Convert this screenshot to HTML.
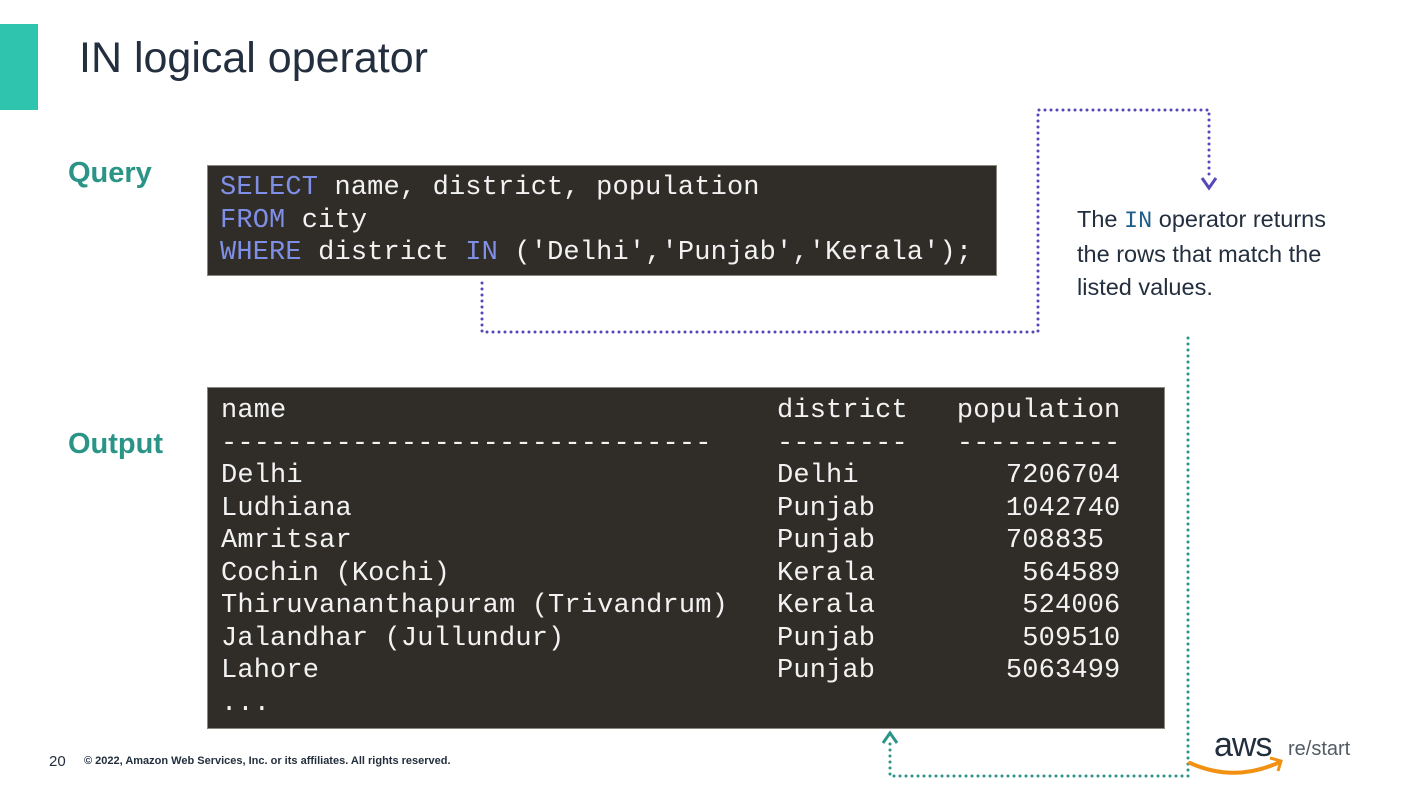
<!DOCTYPE html>
<html><head><meta charset="utf-8"><style>
body{margin:0;width:1426px;height:798px;background:#fff;position:relative;overflow:hidden;font-family:"Liberation Sans",sans-serif;}
.a{position:absolute;}
pre{margin:0;font-family:"Liberation Mono",monospace;font-size:27px;line-height:32.5px;color:#f2f2f2;letter-spacing:0.15px;}
.k{color:#7f8fe6;}
.box{background:#302d29;border:1px solid #8a8780;}
</style></head><body>
<div class="a" style="left:0;top:24px;width:38px;height:86px;background:#2ec4ad"></div>
<div class="a" style="left:79px;top:34px;font-size:43px;color:#232f3e">IN logical operator</div>
<div class="a" style="left:68px;top:157px;font-size:29px;font-weight:bold;color:#2a9486">Query</div>
<div class="a" style="left:68px;top:428px;font-size:29px;font-weight:bold;color:#2a9486">Output</div>
<div class="a box" style="left:207px;top:165px;width:788px;height:109px"></div>
<pre class="a" style="left:220px;top:172px"><span class="k">SELECT</span> name, district, population
<span class="k">FROM</span> city
<span class="k">WHERE</span> district <span class="k">IN</span> ('Delhi','Punjab','Kerala');</pre>
<div class="a box" style="left:207px;top:387px;width:956px;height:340px"></div>
<pre class="a" style="left:221px;top:395px">name                              district   population
------------------------------    --------   ----------
Delhi                             Delhi         7206704
Ludhiana                          Punjab        1042740
Amritsar                          Punjab        708835
Cochin (Kochi)                    Kerala         564589
Thiruvananthapuram (Trivandrum)   Kerala         524006
Jalandhar (Jullundur)             Punjab         509510
Lahore                            Punjab        5063499
...</pre>
<div class="a" style="left:1077px;top:203px;font-size:23.5px;line-height:33px;color:#232f3e">The <span style="font-family:'Liberation Mono',monospace;color:#1d5f8a">IN</span> operator returns<br>the rows that match the<br>listed values.</div>
<svg class="a" style="left:0;top:0" width="1426" height="798">
<g fill="none" stroke-width="3" stroke-linecap="round" stroke-dasharray="0 6">
<path d="M482 283V332H1038V110H1209V180" stroke="#5548b8"/>
<path d="M1188 338V776H890V742" stroke="#2a9486"/>
</g>
<path d="M1202 178L1209 188L1216 178" fill="none" stroke="#5548b8" stroke-width="3"/>
<path d="M883 743L890 733L897 743" fill="none" stroke="#2a9486" stroke-width="3"/>
<path d="M1190 763Q1235 783 1280 762" fill="none" stroke="#f29111" stroke-width="4" stroke-linecap="round"/>
<path d="M1270 758L1281 761L1278 771" fill="none" stroke="#f29111" stroke-width="3"/>
</svg>
<div class="a" style="left:1214px;top:726px;font-size:34px;color:#232f3e;letter-spacing:-1px">aws</div>
<div class="a" style="left:1288px;top:738px;font-size:20px;color:#545b64">re/start</div>
<div class="a" style="left:49px;top:753px;font-size:15px;color:#232f3e">20</div>
<div class="a" style="left:84px;top:755px;font-size:11px;font-weight:bold;color:#232f3e">© 2022, Amazon Web Services, Inc. or its affiliates. All rights reserved.</div>
</body></html>
